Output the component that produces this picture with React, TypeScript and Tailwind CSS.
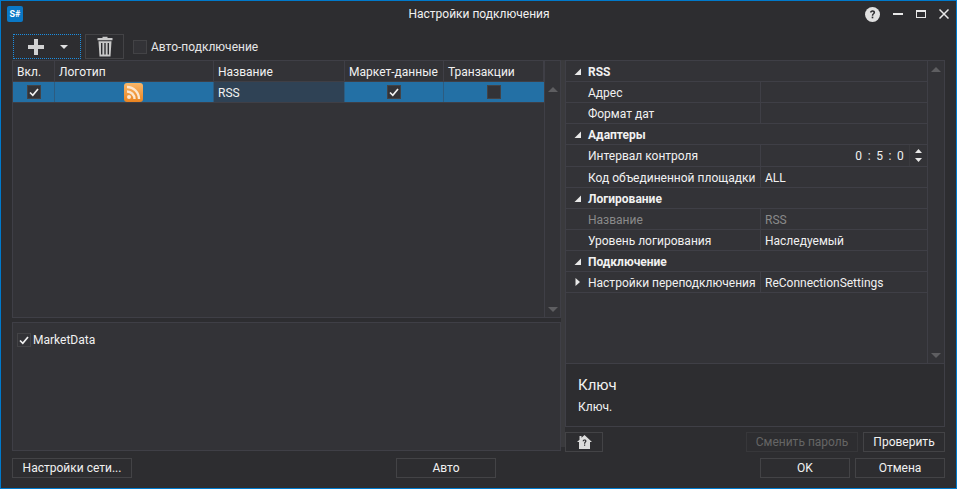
/**
 * Connection settings dialog, dark theme
 */
const font = { fontFamily: 'Roboto, "Open Sans", sans-serif' };

// Small checkbox used in the grid and the panels
const Box = ({ checked, size = 'w-[14px] h-[14px]' }: { checked?: boolean; size?: string }) => (
  <span className={`${size} flex items-center justify-center bg-[#333337] border border-[#434346]`}>
    {checked && (
      <svg width="10" height="9" viewBox="0 0 10 9">
        <path d="M1 4.5L3.8 7.3L9 1" stroke="#f1f1f1" strokeWidth="1.7" fill="none" />
      </svg>
    )}
  </span>
);

const Btn = ({ label, className = '', disabled }: { label: string; className?: string; disabled?: boolean }) => (
  <div
    className={`flex items-center justify-center border whitespace-nowrap ${disabled ? 'border-[#37373a] text-[#656565]' : 'border-[#434346] text-[#f1f1f1]'} ${className}`}
  >
    {label}
  </div>
);

const Arrow = ({ open = true }: { open?: boolean }) =>
  open ? (
    <svg width="7" height="7" viewBox="0 0 7 7" className="ml-[8px] mr-[7px] shrink-0">
      <path d="M7 0.5V7H0.5Z" fill="#e8e8e8" />
    </svg>
  ) : (
    <svg width="5" height="8" viewBox="0 0 5 8" className="ml-[9px] mr-[8px] shrink-0">
      <path d="M0.5 0L5 4L0.5 8Z" fill="#e8e8e8" />
    </svg>
  );

const Group = ({ title }: { title: string }) => (
  <div className="h-[21px] flex items-center border-b border-[#3f3f46] font-bold text-[#f1f1f1]">
    <Arrow />
    <span className="pt-[1px]">{title}</span>
  </div>
);

const Prop = ({
  name,
  value,
  muted,
  tall,
  closed,
  children,
}: {
  name: string;
  value?: string;
  muted?: boolean;
  tall?: boolean;
  closed?: boolean;
  children?: React.ReactNode;
}) => (
  <div className={`${tall ? 'h-[22px]' : 'h-[21px]'} flex border-b border-[#3f3f46] ${muted ? 'text-[#8a8a8a]' : 'text-[#f1f1f1]'}`}>
    <div className="w-[195px] flex items-center border-r border-[#3f3f46] whitespace-nowrap">
      {closed ? <Arrow open={false} /> : <span className="w-[22px] shrink-0" />}
      <span className="pt-[1px]">{name}</span>
    </div>
    <div className="flex-1 flex items-center pl-[4px] whitespace-nowrap">
      {value && <span className="pt-[1px]">{value}</span>}
      {children}
    </div>
  </div>
);

const ScrollTrack = ({ className = '' }: { className?: string }) => (
  <div className={`w-[17px] flex flex-col justify-between items-center pt-[6px] pb-[5px] border-l border-[#3f3f46] ${className}`}>
    <svg width="10" height="5" viewBox="0 0 10 5"><path d="M5 0L10 5H0Z" fill="#5e5e61" /></svg>
    <svg width="10" height="5" viewBox="0 0 10 5"><path d="M0 0H10L5 5Z" fill="#5e5e61" /></svg>
  </div>
);

const HeadCell = ({ label, className }: { label: string; className: string }) => (
  <div className={`flex items-center pl-[4px] pt-[1px] border-r border-[#3f3f46] whitespace-nowrap ${className}`}>{label}</div>
);

const App = () => {
  return (
    <div
      style={font}
      className="w-[957px] h-[489px] bg-[#2d2d30] border border-[#007acc] text-[12px] text-[#f1f1f1] flex flex-col overflow-hidden"
    >
      {/* Title bar */}
      <header className="h-[26px] flex items-center shrink-0">
        <div className="w-[16px] h-[16px] ml-[6px] rounded-[2px] bg-[#0a78c6] flex items-center justify-center text-[9px] font-bold leading-none text-white">
          S#
        </div>
        <div className="flex-1 text-center pl-[70px] leading-none">Настройки подключения</div>
        <div className="flex items-center mr-[7px] gap-[13px] text-[#e8e8e8]">
          <svg width="15" height="15" viewBox="0 0 15 15">
            <circle cx="7.5" cy="7.5" r="7.5" fill="#e0e0e0" />
            <path d="M5 5.6C5 4.2 6.1 3.3 7.6 3.3C9.1 3.3 10.1 4.2 10.1 5.4C10.1 7 8.2 7 8.2 8.7H6.8C6.8 6.6 8.5 6.5 8.5 5.5C8.5 5 8.1 4.7 7.6 4.7C7 4.7 6.6 5.1 6.6 5.6Z" fill="#2d2d30" />
            <rect x="6.7" y="9.6" width="1.6" height="1.7" fill="#2d2d30" />
          </svg>
          <span className="w-[10px] h-[2px] bg-[#e8e8e8]" />
          <span className="w-[10px] h-[8px] border border-t-2 border-[#e8e8e8]" />
          <svg width="10" height="10" viewBox="0 0 10 10">
            <path d="M0.5 0.5L9.5 9.5M9.5 0.5L0.5 9.5" stroke="#e8e8e8" strokeWidth="1.5" />
          </svg>
        </div>
      </header>

      {/* Toolbar */}
      <div className="h-[25px] mt-[7px] ml-[12px] flex items-center shrink-0">
        <div className="w-[68px] h-[25px] border border-dotted border-[#1c8ee0] flex items-center pl-[14px]">
          <svg width="16" height="16" viewBox="0 0 16 16">
            <path d="M6 0H10V6H16V10H10V16H6V10H0V6H6Z" fill="#d2d2d2" />
          </svg>
          <svg width="8" height="4" viewBox="0 0 8 4" className="ml-[16px]">
            <path d="M0 0H8L4 4Z" fill="#e0e0e0" />
          </svg>
        </div>
        <div className="w-[39px] h-[25px] ml-[4px] border border-[#434346] flex items-center justify-center">
          <svg width="16" height="21" viewBox="0 0 16 21">
            <path d="M5.5 2V0.7H10.5V2H15.5V4.2H0.5V2Z" fill="#c8c8c8" />
            <path d="M1.5 5.2H14.5L13.5 20.5H2.5ZM4 7V18.5H5.4V7ZM7.3 7V18.5H8.7V7ZM10.6 7V18.5H12V7Z" fill="#c8c8c8" fillRule="evenodd" />
          </svg>
        </div>
        <Box size="w-[14px] h-[14px] ml-[9px]" />
        <span className="ml-[4px] pt-[1px] text-[#e6e6e6]">Авто-подключение</span>
      </div>

      {/* Main area */}
      <div className="h-[392px] mt-[1px] ml-[11px] flex shrink-0">
        <div className="w-[549px] flex flex-col">
          {/* Connections grid */}
          <div className="h-[258px] flex bg-[#333337] border border-[#3f3f46]">
            <div className="flex-1 flex flex-col">
              <div className="h-[21px] flex border-b border-[#3f3f46] shrink-0">
                <HeadCell label="Вкл." className="w-[42px]" />
                <HeadCell label="Логотип" className="w-[159px]" />
                <HeadCell label="Название" className="w-[131px]" />
                <HeadCell label="Маркет-данные" className="w-[99px]" />
                <HeadCell label="Транзакции" className="w-[100px]" />
              </div>
              <div className="h-[21px] flex bg-[#2370a5] border-b border-[#3f3f46]">
                <div className="w-[42px] flex items-center justify-center border-r border-[#2d5c80]"><Box checked /></div>
                <div className="w-[159px] flex items-center justify-center border-r border-[#2d5c80]">
                  <svg width="19" height="19" viewBox="0 0 19 19" className="-ml-[2px]">
                    <defs>
                      <linearGradient id="rss" x1="0" y1="0" x2="0" y2="1">
                        <stop offset="0" stopColor="#f9b76a" />
                        <stop offset="1" stopColor="#ea8420" />
                      </linearGradient>
                    </defs>
                    <rect width="19" height="19" rx="3" fill="url(#rss)" />
                    <circle cx="5" cy="14" r="2" fill="#fbe6cf" />
                    <path d="M3 8.5A7.5 7.5 0 0 1 10.5 16M3 4A12 12 0 0 1 15 16" stroke="#fbe6cf" strokeWidth="2.4" fill="none" />
                  </svg>
                </div>
                <div className="w-[131px] flex items-center pl-[4px] pt-[1px] bg-[#2f4255] border-r border-[#2d5c80]">RSS</div>
                <div className="w-[99px] flex items-center justify-center border-r border-[#2d5c80]"><Box checked /></div>
                <div className="w-[100px] flex items-center justify-center"><Box /></div>
              </div>
            </div>
            <ScrollTrack className="pt-[26px]" />
          </div>

          {/* Message types */}
          <div className="h-[129px] mt-[4px] bg-[#333337] border border-[#3f3f46] pt-[8px] pl-[4px]">
            <div className="flex items-center gap-[2px]">
              <Box checked />
              <span>MarketData</span>
            </div>
          </div>
        </div>

        {/* Splitter */}
        <div className="w-[4px] bg-[#3a3a3d] h-[387px]" />

        {/* Properties */}
        <div className="w-[380px] flex flex-col">
          <div className="h-[304px] flex bg-[#333337] border border-[#3f3f46]">
            <div className="flex-1">
              <Group title="RSS" />
              <Prop name="Адрес" />
              <Prop name="Формат дат" />
              <Group title="Адаптеры" />
              <Prop name="Интервал контроля" tall>
                <div className="flex-1 flex justify-end items-center h-full">
                  <span className="tracking-[1.3px] pt-[1px]">0 : 5 : 0</span>
                  <span className="ml-[4px] w-[18px] h-full flex flex-col gap-[5px] items-center justify-center border-l border-[#3a3a3e]">
                    <svg width="7" height="4" viewBox="0 0 7 4"><path d="M3.5 0L7 4H0Z" fill="#e8e8e8" /></svg>
                    <svg width="7" height="4" viewBox="0 0 7 4"><path d="M0 0H7L3.5 4Z" fill="#e8e8e8" /></svg>
                  </span>
                </div>
              </Prop>
              <Prop name="Код объединенной площадки" value="ALL" />
              <Group title="Логирование" />
              <Prop name="Название" value="RSS" muted />
              <Prop name="Уровень логирования" value="Наследуемый" />
              <Group title="Подключение" />
              <Prop name="Настройки переподключения" value="ReConnectionSettings" closed />
            </div>
            <ScrollTrack />
          </div>

          {/* Description */}
          <div className="h-[63px] border border-t-0 border-[#3f3f46] pl-[12px] pt-[10px]">
            <div className="text-[15px] leading-[22px]">Ключ</div>
            <div className="mt-[3px] leading-[16px]">Ключ.</div>
          </div>

          <div className="h-[20px] mt-[5px] flex items-stretch">
            <div className="w-[38px] border border-[#434346] flex items-center justify-center">
              <svg width="15" height="14" viewBox="0 0 15 14">
                <path d="M7.5 0L15 7H13V14H2V7H0L2.5 4.7V1H4.5V2.8Z" fill="#dcdcdc" />
                <path d="M5.6 6.2C5.7 5 6.5 4.4 7.6 4.4C8.8 4.4 9.5 5.1 9.5 6C9.5 7.3 8.2 7.4 8.2 8.7H7C7 7 8.2 7 8.2 6.1C8.2 5.7 8 5.5 7.6 5.5C7.1 5.5 6.9 5.8 6.8 6.3ZM7 9.5H8.2V10.8H7Z" fill="#2d2d30" />
              </svg>
            </div>
            <div className="flex-1" />
            <Btn label="Сменить пароль" disabled className="w-[112px]" />
            <Btn label="Проверить" className="w-[82px] ml-[5px]" />
          </div>
        </div>
      </div>

      {/* Footer buttons */}
      <div className="h-[20px] mt-[6px] ml-[11px] flex w-[933px] shrink-0">
        <Btn label="Настройки сети..." className="w-[120px]" />
        <Btn label="Авто" className="w-[100px] ml-[264px]" />
        <div className="flex-1" />
        <Btn label="OK" className="w-[90px]" />
        <Btn label="Отмена" className="w-[90px] ml-[5px]" />
      </div>
    </div>
  );
};

export default App;
